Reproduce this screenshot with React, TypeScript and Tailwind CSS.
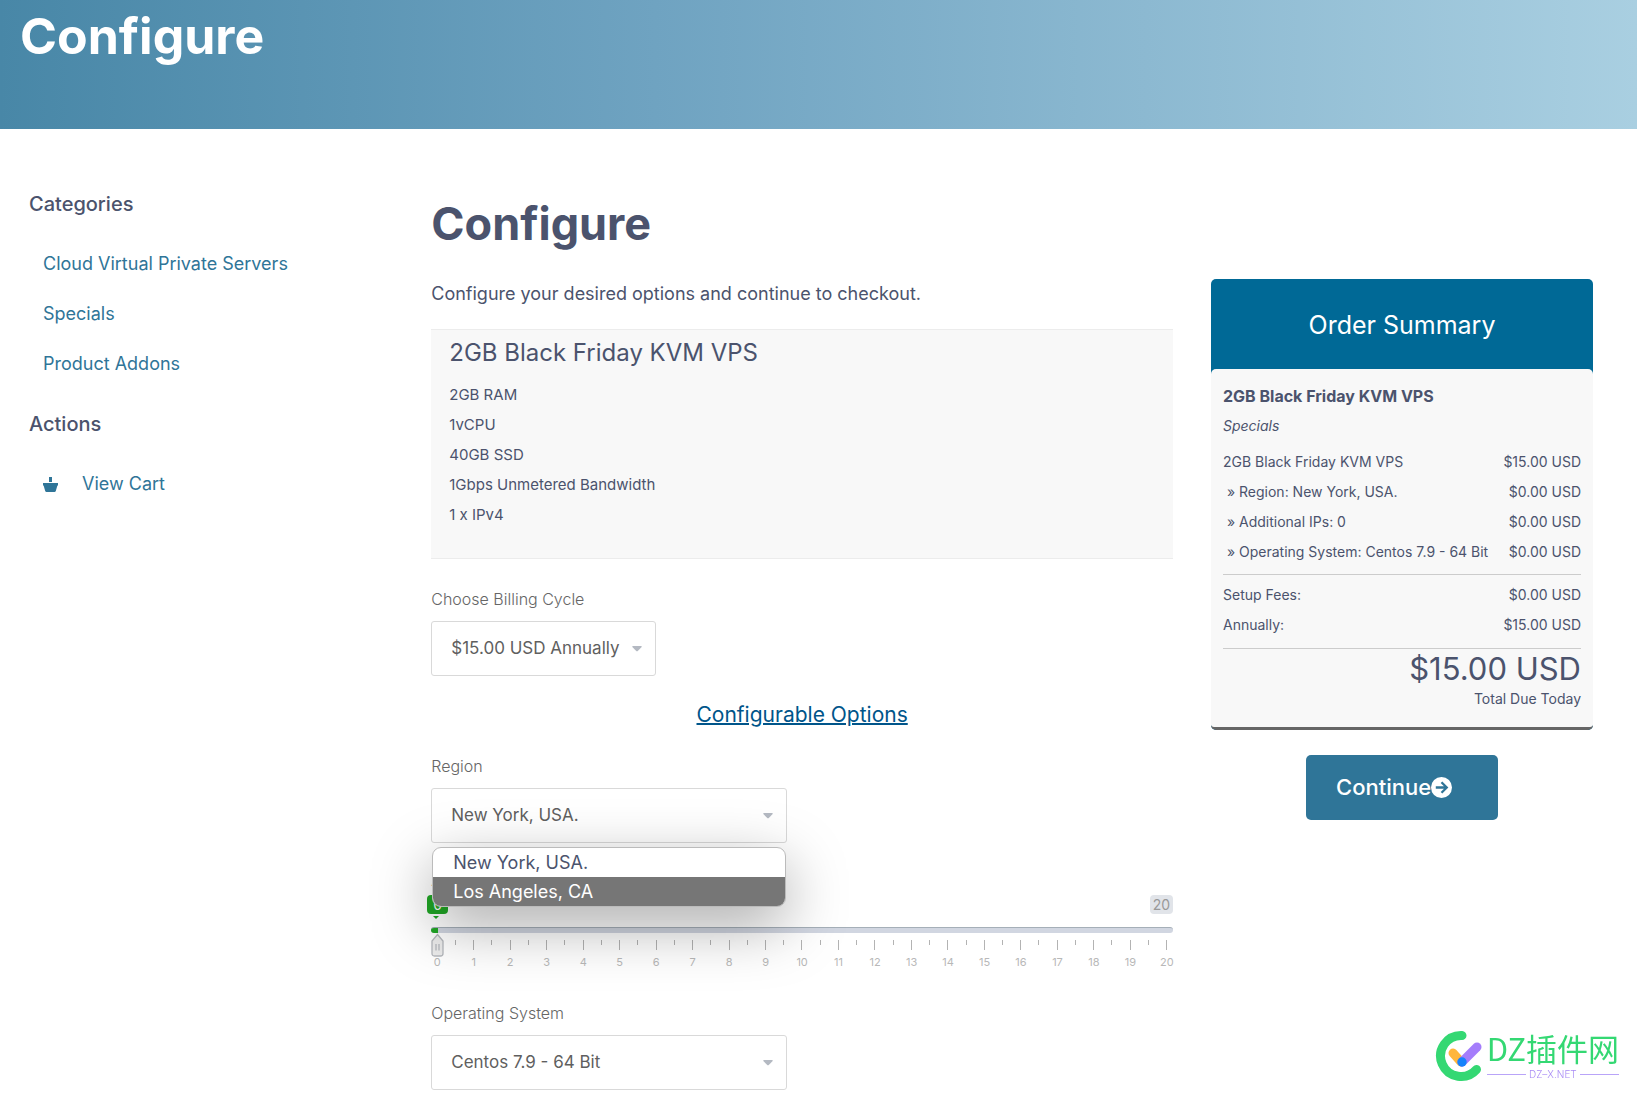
import { useState } from 'react'
import type { ReactNode } from 'react'

const categories = ['Cloud Virtual Private Servers', 'Specials', 'Product Addons']
const features = ['2GB RAM', '1vCPU', '40GB SSD', '1Gbps Unmetered Bandwidth', '1 x IPv4']
const regions = ['New York, USA.', 'Los Angeles, CA']

const MAX_IPS = 20

interface SelectFieldProps {
  id: string
  label: string
  options: string[]
  width: string
  value?: string
  onChange?: (value: string) => void
  children?: ReactNode
}

function SelectField({ id, label, options, width, value, onChange, children }: SelectFieldProps) {
  return (
    <div>
      <label htmlFor={id} className="block text-base leading-[30px] font-light text-[#666]">
        {label}
      </label>
      <div className={`relative mt-[7px] ${width}`}>
        <select
          id={id}
          value={value}
          onChange={(e) => onChange?.(e.target.value)}
          className="block h-[55px] w-full appearance-none rounded-[3px] border border-[#d9d9d9] bg-white pr-6 pl-[19px] text-[17px] text-[#5f5f5f]"
        >
          {options.map((option) => (
            <option key={option}>{option}</option>
          ))}
        </select>
        <svg viewBox="0 0 10 6" className="pointer-events-none absolute top-[25px] right-3.5 h-1.5 w-2.5 fill-[#b4b9c2]">
          <path d="M1 0h8q1 0 .7 1L6 4.8q-1 1-2 0L.3 1Q0 0 1 0z" />
        </svg>
        {children}
      </div>
    </div>
  )
}

function IpSlider() {
  const [count, setCount] = useState(0)
  const percent = (count / MAX_IPS) * 100
  const ticks = Array.from({ length: MAX_IPS * 2 + 1 }, (_, i) => i)

  return (
    <div className="mt-[22px]">
      <label htmlFor="ips" className="block text-base leading-[30px] font-light text-[#666]">
        Additional IPs
      </label>
      <div className="relative">
        <div className="flex h-[19px] justify-end">
          <span className="rounded-[4px] bg-[#e1e4e9] px-[3px] text-sm leading-[19px] text-[#999]">{MAX_IPS}</span>
        </div>
        <div className="mt-[13px] h-1.5 overflow-hidden rounded-full border-t border-[#a5afb8] bg-[#d1d6e1]">
          <div className="h-full min-w-[7px] bg-[#21a826]" style={{ width: `${percent}%` }} />
        </div>
        <div className="mt-[7px] flex h-2.5 items-start justify-between px-1.5">
          {ticks.map((i) => (
            <div key={i} className="flex w-0 justify-center">
              <span className={i % 2 === 0 ? 'h-2.5 w-px shrink-0 bg-[#b3b3b3]' : 'h-[5px] w-px shrink-0 bg-[#b3b3b3]'} />
            </div>
          ))}
        </div>
        <div className="mt-[5px] flex justify-between px-1.5">
          {ticks.filter((i) => i % 2 === 0).map((i) => (
            <span key={i} className="flex w-0 justify-center text-[11px] leading-[14px] text-[#b8b8b8]">
              {i / 2}
            </span>
          ))}
        </div>

        {/* value bubble and handle travel with the value */}
        <div className="pointer-events-none absolute inset-x-1.5 top-0">
          <div className="relative" style={{ left: `${percent}%` }}>
            <span className="absolute top-0 -left-2.5 w-[21px] rounded-[4px] bg-[#21a826] text-center text-sm leading-[19px] text-white">
              {count}
            </span>
            <svg viewBox="0 0 6 3" className="absolute top-[21px] -left-1 h-[3px] w-1.5 fill-[#21a826]">
              <path d="M0 0h6L3 3z" />
            </svg>
            <svg viewBox="0 0 13 24" className="absolute top-[38px] -left-1.5 h-6 w-[13px]">
              <path d="M6.5 1.5 12 8v12.500q0 2.500-2.500 2.500h-6q-2.500 0-2.500-2.500V8z" fill="#ececec" stroke="#b5b8bd" strokeWidth="1.300" />
              <path d="M5 11v6.500M8 11v6.500" stroke="#b5b8bd" strokeWidth="1.300" />
            </svg>
          </div>
        </div>
        <input
          id="ips"
          type="range"
          min={0}
          max={MAX_IPS}
          value={count}
          onChange={(e) => setCount(Number(e.target.value))}
          className="absolute inset-x-0 top-7 h-9 w-full cursor-pointer opacity-0"
        />
      </div>
    </div>
  )
}

function SummaryRow({ label, price }: { label: string; price: string }) {
  return (
    <div className="flex justify-between text-sm leading-[30px] whitespace-nowrap">
      <span className="whitespace-pre">{label}</span>
      <span>{price}</span>
    </div>
  )
}

function OrderSummary({ region }: { region: string }) {
  return (
    <div>
      <section className="rounded-[5px] bg-[#006996]">
        <h2 className="pt-0.5 text-center text-[25px] leading-[88px] text-white">Order Summary</h2>
        <div className="rounded-[5px] border-b-[3px] border-[#666] bg-[#f8f8f8] px-3 pt-3 pb-[18px]">
          <h3 className="text-base leading-[30px] font-bold">2GB Black Friday KVM VPS</h3>
          <p className="text-sm leading-[30px] italic">Specials</p>
          <div className="mt-[6px] border-b border-[#ccc] pb-[7px]">
            <SummaryRow label="2GB Black Friday KVM VPS" price="$15.00 USD" />
            <SummaryRow label={` » Region: ${region}`} price="$0.00 USD" />
            <SummaryRow label=" » Additional IPs: 0" price="$0.00 USD" />
            <SummaryRow label=" » Operating System: Centos 7.9 - 64 Bit" price="$0.00 USD" />
          </div>
          <div className="border-b border-[#ccc] pt-[5px] pb-2">
            <SummaryRow label="Setup Fees:" price="$0.00 USD" />
            <SummaryRow label="Annually:" price="$15.00 USD" />
          </div>
          <div className="text-right">
            <div className="text-[31px] leading-10">$15.00 USD</div>
            <div className="text-sm leading-5">Total Due Today</div>
          </div>
        </div>
      </section>
      <button className="mx-auto mt-[25px] flex h-[65px] w-48 items-center rounded-[5px] bg-[#2f7598] pl-[30px] text-[22px] font-medium text-white">
        Continue
        <svg viewBox="0 0 22 22" className="size-[21px]">
          <circle cx="11" cy="11" r="11" fill="#fff" />
          <path d="M5 11h11M11 5.500 16.500 11 11 16.500" fill="none" stroke="#2f7598" strokeWidth="2.400" />
        </svg>
      </button>
    </div>
  )
}

function Watermark() {
  return (
    <div className="pointer-events-none fixed right-[18px] bottom-3.5 flex items-center gap-[3px]">
      <svg viewBox="0 0 50 52" className="h-[52px] w-[50px]" fill="none" strokeLinecap="round">
        <path d="M28 5.500A20.500 20.500 0 1 0 42.500 39.500" stroke="#34d873" strokeWidth="9" />
        <path d="M19 23l8 9" stroke="#ffb63c" strokeWidth="9" />
        <path d="M43 17L28 32" stroke="#a47dfb" strokeWidth="9" />
        <circle cx="28" cy="32" r="4.700" fill="#1683fb" />
      </svg>
      <div>
        <div className="font-['Noto_Sans_CJK_SC',sans-serif] text-[31px] leading-8 text-[#34d873]">DZ插件网</div>
        <div className="mt-1 flex items-center gap-[3px] text-[10px] leading-3 font-light text-[#a98cf5]">
          <span className="h-px flex-1 bg-[#b9a4f8]" />
          DZ–X.NET
          <span className="h-px flex-1 bg-[#b9a4f8]" />
        </div>
      </div>
    </div>
  )
}

export default function App() {
  const [region, setRegion] = useState(regions[0])
  const [menuOpen, setMenuOpen] = useState(true)

  const pickRegion = (value: string) => {
    setRegion(value)
    setMenuOpen(false)
  }

  return (
    <div className="bg-white font-[Inter,sans-serif] text-[#4b536d]">
      <header className="h-[129px] bg-linear-[90deg] from-[#4887a7] via-[#6fa3c1] via-40% to-[#a9cfe1] px-5 pt-[9px]">
        <div className="text-[50px] leading-[54px] font-bold text-white">Configure</div>
      </header>

      <div className="flex">
        <aside className="w-1/4 pt-[60px] pl-[29px]">
          <h2 className="text-xl leading-[30px] font-medium">Categories</h2>
          <nav className="my-5 flex flex-col pl-3.5 text-lg leading-[50px] text-[#2f7598]">
            {categories.map((name) => (
              <a key={name} href="#">{name}</a>
            ))}
          </nav>
          <h2 className="text-xl leading-[30px] font-medium">Actions</h2>
          <nav className="mt-5 pl-3.5 text-lg leading-[50px] text-[#2f7598]">
            <a href="#" className="flex items-center gap-6">
              <svg viewBox="0 0 15 15" className="size-[15px] fill-current">
                <path d="M6 0h3v5H6zM0 6h15v2.500h-.6L12.800 14q-.3 1-1.300 1h-8q-1 0-1.300-1L.6 8.500H0z" />
              </svg>
              View Cart
            </a>
          </nav>
        </aside>

        <main className="min-w-0 flex-1 pt-[68px] pr-11 pl-[22px]">
          <h1 className="text-[45px] leading-[54px] font-bold">Configure</h1>
          <div className="mt-7 grid grid-cols-[minmax(0,1fr)_382px] gap-[38px]">
            <div>
              <p className="text-lg leading-[30px]">Configure your desired options and continue to checkout.</p>
              <div className="mt-5 border-y border-[#ececec] bg-[#f8f8f8] px-[18px] pt-[3px] pb-7">
                <h2 className="text-2xl leading-10">2GB Black Friday KVM VPS</h2>
                <ul className="mt-[7px] text-[15px] leading-[30px]">
                  {features.map((feature) => (
                    <li key={feature}>{feature}</li>
                  ))}
                </ul>
              </div>

              <div className="mt-[25px]">
                <SelectField id="cycle" label="Choose Billing Cycle" options={['$15.00 USD Annually']} width="w-[225px]" />
              </div>

              <h2 className="mt-6 mb-[21px] text-center text-[21px] leading-[30px] text-[#00558a] underline decoration-2">
                Configurable Options
              </h2>

              <SelectField id="region" label="Region" options={regions} width="w-[356px]" value={region} onChange={pickRegion}>
                {menuOpen && (
                  <ul className="absolute inset-x-px top-[59px] z-10 overflow-hidden rounded-[9px] border border-[#bbb] bg-white text-lg leading-[29px] shadow-[0_18px_60px_rgba(0,0,0,0.35)]">
                    {regions.map((name) => (
                      <li
                        key={name}
                        onClick={() => pickRegion(name)}
                        className={name === region ? 'px-5' : 'bg-[#767676] px-5 text-white'}
                      >
                        {name}
                      </li>
                    ))}
                  </ul>
                )}
              </SelectField>

              <IpSlider />

              <div className="mt-[29px]">
                <SelectField id="os" label="Operating System" options={['Centos 7.9 - 64 Bit']} width="w-[356px]" />
              </div>
            </div>

            <OrderSummary region={region} />
          </div>
        </main>
      </div>
      <Watermark />
    </div>
  )
}
